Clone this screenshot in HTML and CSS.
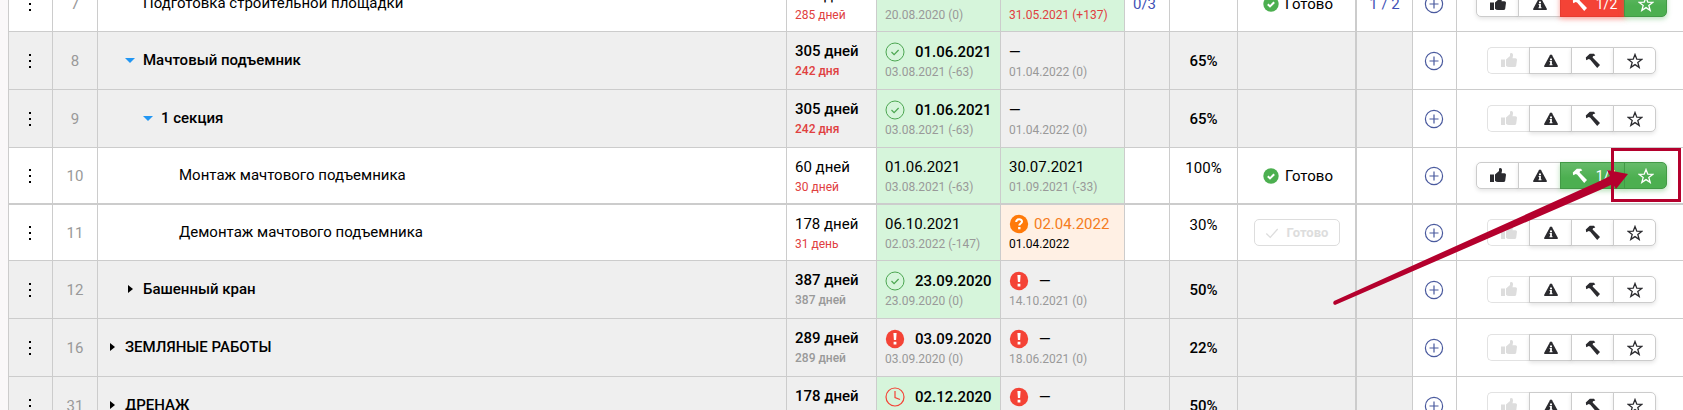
FILE: index.html
```
<!DOCTYPE html>
<html lang="ru">
<head>
<title>График работ</title>
<meta charset="utf-8" />
<link rel="stylesheet" href="styles.css">
</head>

<body>

<svg class="sprite" aria-hidden="true">
	<symbol id="i-plus" viewBox="0 0 20 20">
		<circle cx="10" cy="10" r="8.6" fill="none" stroke="currentColor" stroke-width="1.2" />
		<path d="M10 5.5v9M5.5 10h9" stroke="currentColor" stroke-width="1.2" />
	</symbol>
	<symbol id="i-check" viewBox="0 0 20 20">
		<circle cx="10" cy="10" r="9" fill="none" stroke="currentColor" />
		<path d="M6.5 10l2.6 2.6L13.6 8" fill="none" stroke="currentColor" stroke-width="1.2" />
	</symbol>
	<symbol id="i-clock" viewBox="0 0 20 20">
		<circle cx="10" cy="10" r="9" fill="none" stroke="currentColor" stroke-width="1.2" />
		<path d="M10 4v6.5l5 2" fill="none" stroke="currentColor" stroke-width="1.2" />
	</symbol>
	<symbol id="i-alert" viewBox="0 0 20 20">
		<circle cx="10" cy="10" r="9.2" fill="currentColor" />
		<path d="M8.4 4h3.2l-.5 7H8.9zM8.6 12.7h2.8v2.7H8.6z" fill="#fff" />
	</symbol>
	<symbol id="i-question" viewBox="0 0 20 20">
		<circle cx="10" cy="10" r="9.2" fill="currentColor" />
		<path d="M7.2 8c0-3.6 5.8-3.4 5.8-.4 0 2-2.7 1.900-2.7 4" fill="none" stroke="#fff" stroke-width="2" />
		<path d="M9.1 13h2.4v2.3H9.1z" fill="#fff" />
	</symbol>
	<symbol id="i-done" viewBox="0 0 16 16">
		<circle cx="8" cy="8" r="7.7" fill="#4caf50" />
		<path d="M4.8 8.2l2.2 2.2L11.2 6.2" fill="none" stroke="#fff" stroke-width="2" />
	</symbol>
	<symbol id="i-tick" viewBox="0 0 16 16">
		<path d="M1.5 8.5L6 13 14.5 3.5" fill="none" stroke="currentColor" stroke-width="1.5" />
	</symbol>
	<symbol id="i-thumb" viewBox="0 0 16 16">
		<path d="M0 6.5h4v7.5H0zM5 6.500l4-3.500V1Q9 0 10.200 0q2 0 1.800 2.700L11.500 5.300H14.500q1.500 0 1.500 1.500L15.200 12.700q-.3 1.300-1.700 1.300H8Q6 14 5 12.700z" fill="currentColor" />
	</symbol>
	<symbol id="i-warn" viewBox="0 0 16 16">
		<path d="M8 1.5q.7 0 1.1.7l5.7 10.500q.6 1.300-.8 1.300H2q-1.400 0-.8-1.300L6.900 2.200Q7.300 1.500 8 1.500z" fill="currentColor" />
		<path d="M7 5.5h2v1.700H7zM6.600 8h2.300v3.300h.6v1H6.500v-1h.6V9h-.5z" fill="#fff" />
	</symbol>
	<symbol id="i-hammer" viewBox="0 0 16 16">
		<path d="M1.200 7.200L.8 4.600 4.800.8 9 .8 10.300 2.600 8 3.200 7.600 4.600 15 12.100 12.200 15 5.300 6.700 3.800 5.900z" fill="currentColor" />
	</symbol>
	<symbol id="i-star" viewBox="0 0 16 16">
		<path d="M8 1.500l1.800 4.700 4.900.2-3.900 3.100 1.400 4.900L8 11.600l-4.200 2.800 1.400-4.900L1.300 6.400l4.900-.2z" fill="none" stroke="currentColor" stroke-width="1.300" />
	</symbol>
</svg>

<div class="schedule">

<table class="tasks">

	<colgroup>
		<col class="w-menu" />
		<col class="w-num" />
		<col />
		<col class="w-days" />
		<col class="w-date" />
		<col class="w-date" />
		<col class="w-count" />
		<col class="w-percent" />
		<col class="w-status" />
		<col class="w-docs" />
		<col class="w-add" />
		<col class="w-actions" />
	</colgroup>

	<tbody>

	<tr class="task">
		<td class="menu"><button class="dots" aria-label="Меню"></button></td>
		<td class="num">7</td>
		<td class="name level-2">Подготовка строительной площадки</td>
		<td class="days"><div class="main">422 дня</div><div class="sub late">285 дней</div></td>
		<td class="date ok"><div class="main">20.08.2020</div><div class="sub">20.08.2020 (0)</div></td>
		<td class="date ok"><div class="main">15.10.2021</div><div class="sub late">31.05.2021 (+137)</div></td>
		<td class="count"><a href="#">0/3</a></td>
		<td class="percent"></td>
		<td class="status"><span class="done"><svg><use href="#i-done" /></svg>Готово</span></td>
		<td class="docs"><a href="#">1 / 2</a></td>
		<td class="add"><button class="plus" aria-label="Добавить"><svg><use href="#i-plus" /></svg></button></td>
		<td class="actions">
			<div class="group">
				<button aria-label="Нравится"><svg><use href="#i-thumb" /></svg></button>
				<button aria-label="Внимание"><svg><use href="#i-warn" /></svg></button>
				<button class="wide red"><svg><use href="#i-hammer" /></svg>1/2</button>
				<button class="green" aria-label="Избранное"><svg><use href="#i-star" /></svg></button>
			</div>
		</td>
	</tr>

	<tr class="section">
		<td class="menu"><button class="dots" aria-label="Меню"></button></td>
		<td class="num">8</td>
		<td class="name level-2"><button class="toggle open" aria-label="Свернуть"></button>Мачтовый подъемник</td>
		<td class="days"><div class="main">305 дней</div><div class="sub late">242 дня</div></td>
		<td class="date ok"><div class="main"><svg class="check"><use href="#i-check" /></svg>01.06.2021</div><div class="sub">03.08.2021 (-63)</div></td>
		<td class="date"><div class="main">—</div><div class="sub">01.04.2022 (0)</div></td>
		<td class="count"></td>
		<td class="percent">65%</td>
		<td class="status"></td>
		<td class="docs"></td>
		<td class="add"><button class="plus" aria-label="Добавить"><svg><use href="#i-plus" /></svg></button></td>
		<td class="actions">
			<div class="group">
				<button disabled aria-label="Нравится"><svg><use href="#i-thumb" /></svg></button>
				<button aria-label="Внимание"><svg><use href="#i-warn" /></svg></button>
				<button aria-label="Работы"><svg><use href="#i-hammer" /></svg></button>
				<button aria-label="Избранное"><svg><use href="#i-star" /></svg></button>
			</div>
		</td>
	</tr>

	<tr class="section">
		<td class="menu"><button class="dots" aria-label="Меню"></button></td>
		<td class="num">9</td>
		<td class="name level-3"><button class="toggle open" aria-label="Свернуть"></button>1 секция</td>
		<td class="days"><div class="main">305 дней</div><div class="sub late">242 дня</div></td>
		<td class="date ok"><div class="main"><svg class="check"><use href="#i-check" /></svg>01.06.2021</div><div class="sub">03.08.2021 (-63)</div></td>
		<td class="date"><div class="main">—</div><div class="sub">01.04.2022 (0)</div></td>
		<td class="count"></td>
		<td class="percent">65%</td>
		<td class="status"></td>
		<td class="docs"></td>
		<td class="add"><button class="plus" aria-label="Добавить"><svg><use href="#i-plus" /></svg></button></td>
		<td class="actions">
			<div class="group">
				<button disabled aria-label="Нравится"><svg><use href="#i-thumb" /></svg></button>
				<button aria-label="Внимание"><svg><use href="#i-warn" /></svg></button>
				<button aria-label="Работы"><svg><use href="#i-hammer" /></svg></button>
				<button aria-label="Избранное"><svg><use href="#i-star" /></svg></button>
			</div>
		</td>
	</tr>

	<tr class="task divider">
		<td class="menu"><button class="dots" aria-label="Меню"></button></td>
		<td class="num">10</td>
		<td class="name level-4">Монтаж мачтового подъемника</td>
		<td class="days"><div class="main">60 дней</div><div class="sub late">30 дней</div></td>
		<td class="date ok"><div class="main">01.06.2021</div><div class="sub">03.08.2021 (-63)</div></td>
		<td class="date ok"><div class="main">30.07.2021</div><div class="sub">01.09.2021 (-33)</div></td>
		<td class="count"></td>
		<td class="percent">100%</td>
		<td class="status"><span class="done"><svg><use href="#i-done" /></svg>Готово</span></td>
		<td class="docs"></td>
		<td class="add"><button class="plus" aria-label="Добавить"><svg><use href="#i-plus" /></svg></button></td>
		<td class="actions">
			<div class="group">
				<button aria-label="Нравится"><svg><use href="#i-thumb" /></svg></button>
				<button aria-label="Внимание"><svg><use href="#i-warn" /></svg></button>
				<button class="wide green"><svg><use href="#i-hammer" /></svg>1/1</button>
				<button class="green" aria-label="Избранное"><svg><use href="#i-star" /></svg></button>
			</div>
		</td>
	</tr>

	<tr class="task">
		<td class="menu"><button class="dots" aria-label="Меню"></button></td>
		<td class="num">11</td>
		<td class="name level-4">Демонтаж мачтового подъемника</td>
		<td class="days"><div class="main">178 дней</div><div class="sub late">31 день</div></td>
		<td class="date ok"><div class="main">06.10.2021</div><div class="sub">02.03.2022 (-147)</div></td>
		<td class="date risk"><div class="main"><svg><use href="#i-question" /></svg>02.04.2022</div><div class="sub">01.04.2022</div></td>
		<td class="count"></td>
		<td class="percent">30%</td>
		<td class="status"><button class="finish" disabled><svg><use href="#i-tick" /></svg>Готово</button></td>
		<td class="docs"></td>
		<td class="add"><button class="plus" aria-label="Добавить"><svg><use href="#i-plus" /></svg></button></td>
		<td class="actions">
			<div class="group">
				<button disabled aria-label="Нравится"><svg><use href="#i-thumb" /></svg></button>
				<button aria-label="Внимание"><svg><use href="#i-warn" /></svg></button>
				<button aria-label="Работы"><svg><use href="#i-hammer" /></svg></button>
				<button aria-label="Избранное"><svg><use href="#i-star" /></svg></button>
			</div>
		</td>
	</tr>

	<tr class="section">
		<td class="menu"><button class="dots" aria-label="Меню"></button></td>
		<td class="num">12</td>
		<td class="name level-2"><button class="toggle" aria-label="Развернуть"></button>Башенный кран</td>
		<td class="days"><div class="main">387 дней</div><div class="sub">387 дней</div></td>
		<td class="date ok"><div class="main"><svg class="check"><use href="#i-check" /></svg>23.09.2020</div><div class="sub">23.09.2020 (0)</div></td>
		<td class="date"><div class="main"><svg class="alert"><use href="#i-alert" /></svg>—</div><div class="sub">14.10.2021 (0)</div></td>
		<td class="count"></td>
		<td class="percent">50%</td>
		<td class="status"></td>
		<td class="docs"></td>
		<td class="add"><button class="plus" aria-label="Добавить"><svg><use href="#i-plus" /></svg></button></td>
		<td class="actions">
			<div class="group">
				<button disabled aria-label="Нравится"><svg><use href="#i-thumb" /></svg></button>
				<button aria-label="Внимание"><svg><use href="#i-warn" /></svg></button>
				<button aria-label="Работы"><svg><use href="#i-hammer" /></svg></button>
				<button aria-label="Избранное"><svg><use href="#i-star" /></svg></button>
			</div>
		</td>
	</tr>

	<tr class="section">
		<td class="menu"><button class="dots" aria-label="Меню"></button></td>
		<td class="num">16</td>
		<td class="name level-1"><button class="toggle" aria-label="Развернуть"></button>ЗЕМЛЯНЫЕ РАБОТЫ</td>
		<td class="days"><div class="main">289 дней</div><div class="sub">289 дней</div></td>
		<td class="date"><div class="main"><svg class="alert"><use href="#i-alert" /></svg>03.09.2020</div><div class="sub">03.09.2020 (0)</div></td>
		<td class="date"><div class="main"><svg class="alert"><use href="#i-alert" /></svg>—</div><div class="sub">18.06.2021 (0)</div></td>
		<td class="count"></td>
		<td class="percent">22%</td>
		<td class="status"></td>
		<td class="docs"></td>
		<td class="add"><button class="plus" aria-label="Добавить"><svg><use href="#i-plus" /></svg></button></td>
		<td class="actions">
			<div class="group">
				<button disabled aria-label="Нравится"><svg><use href="#i-thumb" /></svg></button>
				<button aria-label="Внимание"><svg><use href="#i-warn" /></svg></button>
				<button aria-label="Работы"><svg><use href="#i-hammer" /></svg></button>
				<button aria-label="Избранное"><svg><use href="#i-star" /></svg></button>
			</div>
		</td>
	</tr>

	<tr class="section">
		<td class="menu"><button class="dots" aria-label="Меню"></button></td>
		<td class="num">31</td>
		<td class="name level-1"><button class="toggle" aria-label="Развернуть"></button>ДРЕНАЖ</td>
		<td class="days"><div class="main">178 дней</div><div class="sub">178 дней</div></td>
		<td class="date ok"><div class="main"><svg class="alert"><use href="#i-clock" /></svg>02.12.2020</div><div class="sub">02.12.2020 (0)</div></td>
		<td class="date"><div class="main"><svg class="alert"><use href="#i-alert" /></svg>—</div><div class="sub">28.05.2021 (0)</div></td>
		<td class="count"></td>
		<td class="percent">50%</td>
		<td class="status"></td>
		<td class="docs"></td>
		<td class="add"><button class="plus" aria-label="Добавить"><svg><use href="#i-plus" /></svg></button></td>
		<td class="actions">
			<div class="group">
				<button disabled aria-label="Нравится"><svg><use href="#i-thumb" /></svg></button>
				<button aria-label="Внимание"><svg><use href="#i-warn" /></svg></button>
				<button aria-label="Работы"><svg><use href="#i-hammer" /></svg></button>
				<button aria-label="Избранное"><svg><use href="#i-star" /></svg></button>
			</div>
		</td>
	</tr>

	</tbody>

</table>

<!-- pointer to the star button -->
<svg class="pointer" viewBox="0 0 350 160" aria-hidden="true">
	<rect x="279.500" y="2.500" width="67" height="51" fill="none" stroke="#b4002d" stroke-width="3" />
	<path d="M1 154L267 34 277 29 274 23 295 27 283 42 280 37 267 43 2 158Q-1 157 1 154z" fill="#b4002d" />
</svg>

</div>

</body>
</html>
```

FILE: styles.css
```
body {
	margin: 0;
	height: 100vh;
	overflow: hidden;
	background: #faf8f9;
	font: 15px/20px Roboto, sans-serif;
	color: #000;
}

.sprite {
	display: none;
}

.schedule {
	position: relative;
	height: 100vh;
	padding-left: 8px;
	overflow: hidden;
}

/* the list is scrolled part of the way down its first row */
.tasks {
	width: 100%;
	margin-top: -24px;
	table-layout: fixed;
	border-collapse: separate;
	border-spacing: 0;
	border-left: 1px solid #ccc;
	background: #fff;
}

.w-menu, .w-add { width: 44px; }
.w-num, .w-count { width: 45px; }
.w-days { width: 90px; }
.w-date { width: 124px; }
.w-percent { width: 68px; }
.w-status { width: 119px; }
.w-docs { width: 56px; }
.w-actions { width: 226px; }

td {
	box-sizing: border-box;
	height: 56px;
	padding: 0;
	border: solid #ccc;
	border-width: 0 1px 1px 0;
	vertical-align: middle;
	white-space: nowrap;
}

.section td {
	height: 58px;
	background: #efefef;
	font-weight: 500;
}

.divider td {
	height: 57px;
	border-bottom-width: 2px;
}

.section .add,
.section .actions {
	background: #fff;
}

button {
	padding: 0;
	border: 0;
	background: none;
	font: inherit;
	color: inherit;
}

a {
	color: #3f51b5;
	text-decoration: none;
}

.menu, .num, .percent, .status, .docs, .add {
	text-align: center;
}

.menu, .add {
	padding-right: 1px;
}

.dots {
	display: block;
	width: 2px;
	height: 2px;
	margin: 0 auto;
	background: #000;
	box-shadow: 0 -6px #000, 0 6px #000;
}

.tasks .num {
	font-weight: 400;
	color: #999;
}

.name {
	padding-bottom: 1px;
}

.level-1 { padding-left: 27px; }
.level-2 { padding-left: 45px; }
.level-3 { padding-left: 63px; }
.level-4 { padding-left: 81px; }

.toggle {
	display: inline-block;
	width: 18px;
	height: 10px;
	margin-left: -18px;
}

.toggle::before {
	content: "";
	display: block;
	width: 0;
	margin-left: 3px;
	border: solid transparent;
	border-width: 4px 0 4px 5px;
	border-left-color: #000;
}

.toggle.open::before {
	margin-left: 0;
	border-width: 5px 5px 0;
	border-color: #2196f3 transparent transparent;
}

.days, .date {
	padding-left: 8px;
}

.date,
.task .days {
	padding-top: 2px;
}

.main {
	display: flex;
	align-items: center;
	height: 20px;
}

.main svg {
	width: 20px;
	height: 20px;
	margin-right: 5px;
}

.section .main svg {
	margin-right: 10px;
}

.sub {
	font-size: 12px;
	color: #999;
}

.section .date .sub {
	font-weight: 400;
}

.sub.late {
	color: #e04040;
}

.ok,
.section .ok {
	background: #d6f5db;
}

.risk {
	background: #fff0e4;
}

.risk .main {
	color: #f57c20;
}

.risk .main svg {
	color: #ff7a0a;
}

.risk .sub {
	color: #000;
}

.check {
	color: #4ca651;
}

.alert {
	color: #f44336;
}

.count {
	padding-left: 8px;
}

.task .percent {
	padding-bottom: 16px;
}

td.status {
	border-right-width: 2px;
}

.done {
	display: inline-flex;
	align-items: center;
	padding: 3px 0 0 3px;
}

.done svg {
	width: 16px;
	height: 16px;
	margin-right: 6px;
}

.finish {
	display: inline-flex;
	align-items: center;
	justify-content: center;
	width: 86px;
	height: 27px;
	border: 1px solid #ddd;
	border-radius: 5px;
	font-size: 13px;
	font-weight: 700;
	color: #ddd;
}

.finish svg {
	width: 14px;
	height: 14px;
	margin-right: 8px;
}

.plus {
	display: block;
	width: 20px;
	height: 20px;
	margin: 0 auto;
	color: #4a5a9e;
}

.plus svg {
	display: block;
	width: 20px;
	height: 20px;
}

td.actions {
	padding-left: 3px;
	border-right: 0;
	text-align: center;
}

.group {
	display: inline-flex;
	vertical-align: middle;
}

.group button {
	display: flex;
	align-items: center;
	justify-content: center;
	width: 43px;
	height: 27px;
	margin-left: -1px;
	border: 1px solid #ccc;
	background: #fff;
	box-shadow: 0 2px 4px rgba(0, 0, 0, 0.1);
	color: #2b2b2f;
}

.group button:first-child {
	margin-left: 0;
	border-radius: 5px 0 0 5px;
}

.group button:last-child {
	border-radius: 0 5px 5px 0;
}

.group button:disabled {
	border-color: #e2e2e2;
	border-right-color: #ccc;
	box-shadow: none;
	color: #ddd;
}

.group svg {
	width: 16px;
	height: 16px;
}

.group .wide {
	width: 65px;
	padding-left: 4px;
	gap: 8px;
	font-size: 14px;
}

.group .green {
	border-color: #429a46;
	background: linear-gradient(#66bb6a, #4caf50 60%);
	box-shadow: 0 2px 5px rgba(76, 175, 80, 0.4);
	color: #fff;
}

.group .red {
	border-color: #e53c30;
	background: #f44336;
	box-shadow: 0 2px 5px rgba(244, 67, 54, 0.5);
	color: #fff;
}

.pointer {
	position: absolute;
	top: 147px;
	right: 0;
	width: 350px;
	height: 160px;
}
```
